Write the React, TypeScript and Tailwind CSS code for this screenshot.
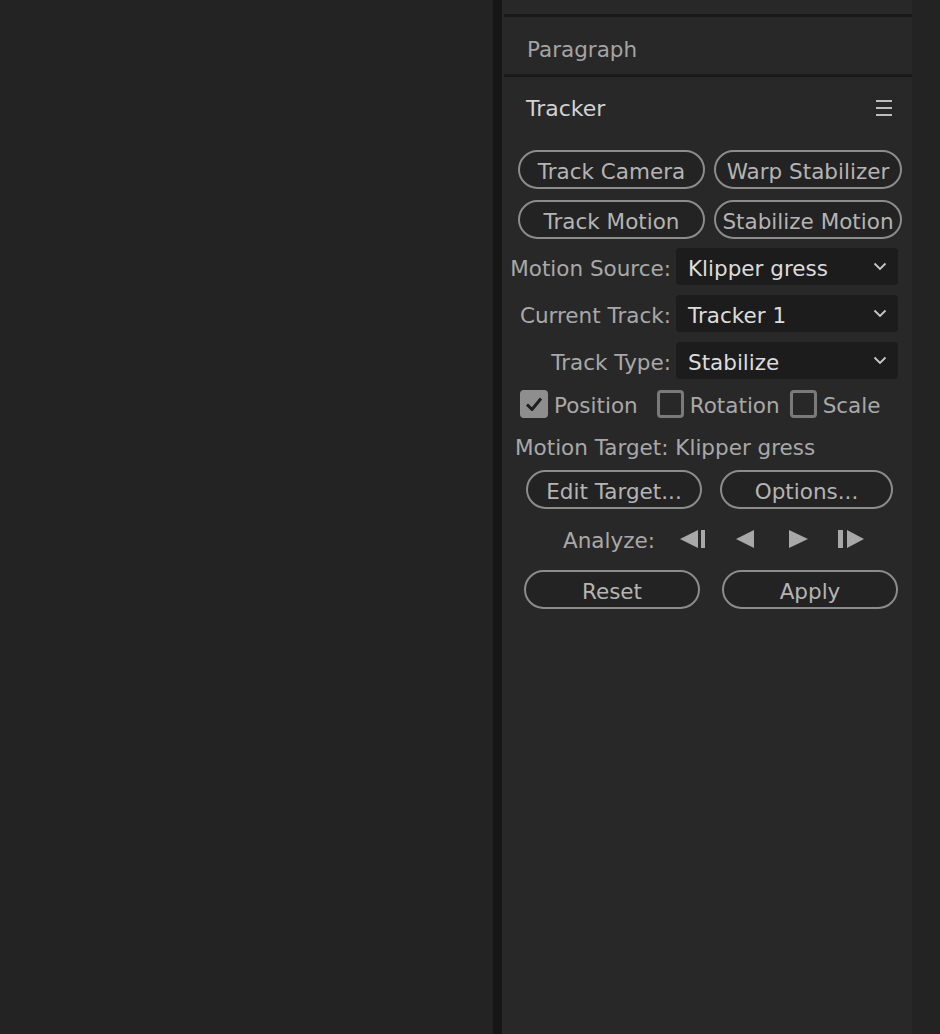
import React from "react";

const font = { fontFamily: "'DejaVu Sans', Verdana, sans-serif" };

function Pill({ label, w }: { label: string; w: string }) {
  return (
    <div
      className={`h-[39px] ${w} rounded-full border-2 border-[#8c8c8c] bg-[#232323] flex items-center justify-center pt-[4px] text-[21.5px] leading-none text-[#b4b4b4] whitespace-nowrap`}
    >
      {label}
    </div>
  );
}

function Dropdown({ value }: { value: string }) {
  return (
    <div className="w-[222px] h-[37px] rounded-[4px] bg-[#1c1c1c] flex items-center justify-between pl-[12px] pr-[11px]">
      <span className="text-[21.5px] leading-none pt-[4px] text-[#dcdcdc]">{value}</span>
      <svg width="14" height="9" viewBox="0 0 14 9" fill="none">
        <path d="M1.5 1.5 L7 7 L12.5 1.5" stroke="#c8c8c8" strokeWidth="1.8" />
      </svg>
    </div>
  );
}

function Check({ checked }: { checked?: boolean }) {
  if (checked)
    return (
      <div className="w-[28px] h-[28px] rounded-[4px] bg-[#8e8e8e] flex items-center justify-center">
        <svg width="18" height="16" viewBox="0 0 18 16" fill="none">
          <path d="M2 8.5 L7 13.5 L16 2.5" stroke="#1e1e1e" strokeWidth="3" strokeLinejoin="round" />
        </svg>
      </div>
    );
  return <div className="w-[27px] h-[28px] rounded-[4px] border-[3px] border-[#7a7a7a]" />;
}

export default function App() {
  return (
    <div className="w-[940px] h-[1034px] flex bg-[#232323]" style={font}>
      <div className="w-[493px] h-full bg-[#232323]" />
      <div className="w-[9px] h-full bg-[#161616]" />
      <div className="w-[410px] h-full bg-[#282828] flex flex-col">
        <div className="h-[14px]" />
        <div className="ml-[2px] h-[3px] bg-[#191919]" />
        <div className="h-[57px] flex items-center pl-[25px] pt-[8px] text-[21.5px] leading-none text-[#a4a4a4]">Paragraph</div>
        <div className="ml-[2px] h-[3px] bg-[#191919]" />
        <div className="h-[60px] flex items-center justify-between pl-[24px] pr-[20px]">
          <span className="text-[22px] leading-none pt-[4px] text-[#d2d2d2]">Tracker</span>
          <div className="flex flex-col gap-[5px] w-[16px] mt-[2px]">
            <div className="h-[2px] bg-[#bdbdbd]" />
            <div className="h-[2px] bg-[#bdbdbd]" />
            <div className="h-[2px] bg-[#bdbdbd]" />
          </div>
        </div>
        <div className="h-[13px]" />
        <div className="flex gap-[9px] pl-[16px]">
          <Pill label="Track Camera" w="w-[187px]" />
          <Pill label="Warp Stabilizer" w="w-[188px]" />
        </div>
        <div className="flex gap-[9px] pl-[16px] mt-[11px]">
          <Pill label="Track Motion" w="w-[187px]" />
          <Pill label="Stabilize Motion" w="w-[188px]" />
        </div>
        <div className="flex flex-col gap-[10px] mt-[9px]">
          {[
            ["Motion Source:", "Klipper gress"],
            ["Current Track:", "Tracker 1"],
            ["Track Type:", "Stabilize"],
          ].map(([l, v]) => (
            <div key={l} className="flex items-center">
              <div className="w-[174px] text-right pr-[5px] pt-[4px] text-[21.5px] leading-none text-[#a8a8a8] whitespace-nowrap">{l}</div>
              <Dropdown value={v} />
            </div>
          ))}
        </div>
        <div className="flex items-center h-[28px] mt-[11px] pl-[18px] text-[21.5px] leading-none text-[#a8a8a8]">
          <Check checked />
          <span className="ml-[6px] pt-[3px]">Position</span>
          <div className="ml-[19px]"><Check /></div>
          <span className="ml-[6px] pt-[3px]">Rotation</span>
          <div className="ml-[10px]"><Check /></div>
          <span className="ml-[6px] pt-[3px]">Scale</span>
        </div>
        <div className="h-[30px] flex items-center mt-[13px] pl-[13px] pt-[3px] text-[21.5px] leading-none text-[#a8a8a8] whitespace-nowrap">
          Motion Target: Klipper gress
        </div>
        <div className="flex mt-[9px] pl-[24px] gap-[18px]">
          <Pill label="Edit Target..." w="w-[176px]" />
          <Pill label="Options..." w="w-[173px]" />
        </div>
        <div className="flex items-center mt-[13px] pl-[61px] h-[34px] text-[21.5px] leading-none text-[#a8a8a8]">
          <span className="pt-[3px]">Analyze:</span>
          <svg className="ml-[25px]" width="25" height="18" viewBox="0 0 25 18">
            <path d="M0 9 L18 0 L18 18 Z" fill="#a8a8a8" />
            <rect x="21" y="0" width="4" height="18" fill="#a8a8a8" />
          </svg>
          <svg className="ml-[31px]" width="18" height="18" viewBox="0 0 18 18">
            <path d="M0 9 L18 0 L18 18 Z" fill="#a8a8a8" />
          </svg>
          <svg className="ml-[35px]" width="19" height="18" viewBox="0 0 19 18">
            <path d="M19 9 L0 0 L0 18 Z" fill="#a8a8a8" />
          </svg>
          <svg className="ml-[30px]" width="26" height="18" viewBox="0 0 26 18">
            <rect x="0" y="0" width="5" height="18" fill="#a8a8a8" />
            <path d="M26 9 L9 0 L9 18 Z" fill="#a8a8a8" />
          </svg>
        </div>
        <div className="flex mt-[14px] pl-[22px] gap-[22px]">
          <Pill label="Reset" w="w-[176px]" />
          <Pill label="Apply" w="w-[176px]" />
        </div>
      </div>
      <div className="flex-1 h-full bg-[#232323]" />
    </div>
  );
}
